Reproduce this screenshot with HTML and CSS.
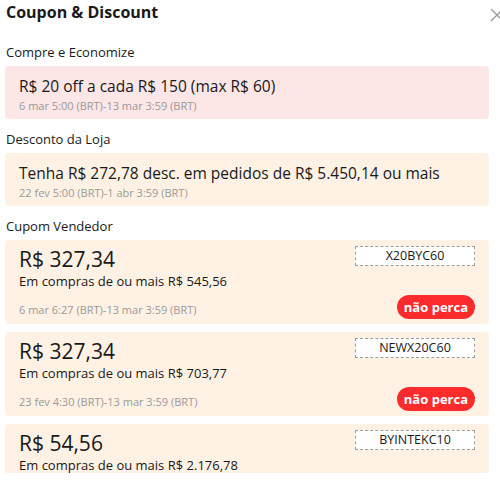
FILE: index.html
```html
<!DOCTYPE html>
<html lang="pt-BR">
<head>
    <meta charset="UTF-8">
    <meta name="viewport" content="width=device-width, initial-scale=1.0">
    <title>Coupon &amp; Discount</title>
    <link rel="stylesheet" href="styles.css">
</head>
<body>
    <div class="panel">
        <header class="panel-header">
            <h1>Coupon &amp; Discount</h1>
            <span class="close" aria-label="Fechar">
                <svg width="14" height="14" viewBox="0 0 14 14"><path d="M1 1 L13 13 M13 1 L1 13" stroke="#9a9a9a" stroke-width="1.3" fill="none"/></svg>
            </span>
        </header>

        <div class="panel-body">
            <div class="section-label">Compre e Economize</div>
            <div class="promo promo-red">
                <div class="promo-title">R$ 20 off a cada R$ 150 (max R$ 60)</div>
                <div class="promo-date">6 mar 5:00 (BRT)-13 mar 3:59 (BRT)</div>
            </div>

            <div class="section-label">Desconto da Loja</div>
            <div class="promo">
                <div class="promo-title">Tenha R$ 272,78 desc. em pedidos de R$ 5.450,14 ou mais</div>
                <div class="promo-date">22 fev 5:00 (BRT)-1 abr 3:59 (BRT)</div>
            </div>

            <div class="section-label">Cupom Vendedor</div>
            <div class="coupon">
                <div class="coupon-info">
                    <div class="coupon-amount">R$ 327,34</div>
                    <div class="coupon-min">Em compras de ou mais R$ 545,56</div>
                    <div class="promo-date coupon-date">6 mar 6:27 (BRT)-13 mar 3:59 (BRT)</div>
                </div>
                <div class="coupon-actions">
                    <div class="coupon-code">X20BYC60</div>
                    <button class="grab-button">não perca</button>
                </div>
            </div>

            <div class="coupon">
                <div class="coupon-info">
                    <div class="coupon-amount">R$ 327,34</div>
                    <div class="coupon-min">Em compras de ou mais R$ 703,77</div>
                    <div class="promo-date coupon-date">23 fev 4:30 (BRT)-13 mar 3:59 (BRT)</div>
                </div>
                <div class="coupon-actions">
                    <div class="coupon-code">NEWX20C60</div>
                    <button class="grab-button">não perca</button>
                </div>
            </div>

            <div class="coupon">
                <div class="coupon-info">
                    <div class="coupon-amount">R$ 54,56</div>
                    <div class="coupon-min">Em compras de ou mais R$ 2.176,78</div>
                </div>
                <div class="coupon-actions">
                    <div class="coupon-code">BYINTEKC10</div>
                </div>
            </div>
        </div>
    </div>
</body>
</html>
```

FILE: styles.css
```css
:root {
    --text-color: #191919;
    --muted-color: #999999;
    --red-card: #fde6e6;
    --cream-card: #fff2e4;
    --button-red: #fd2b2b;
}

body {
    font-family: "Open Sans", "Liberation Sans", sans-serif;
    color: var(--text-color);
    background-color: white;
    margin: 0;
    padding: 0;
}

.panel {
    height: 473px;
    display: flex;
    flex-direction: column;
    overflow: hidden;
}

.panel-header {
    display: flex;
    flex-shrink: 0;
    justify-content: space-between;
    align-items: flex-start;
    height: 32px;
    padding-left: 6px;
}

.panel-header h1 {
    margin: 0;
    font-size: 16px;
    font-weight: 700;
    line-height: 24px;
}

.close {
    margin-top: 5px;
    margin-right: -4px;
    width: 14px;
    height: 14px;
}

.panel-body {
    flex: 1;
    overflow: hidden;
    padding: 0 11px 0 5px;
}

.section-label {
    font-size: 13px;
    line-height: 20px;
    padding: 10px 0 0 1px;
    margin-bottom: 4px;
}

.promo {
    background-color: var(--cream-card);
    border-radius: 4px;
    padding: 9px 14px 4px;
}

.promo-red {
    background-color: var(--red-card);
}

.promo-title {
    font-size: 15.5px;
    line-height: 22px;
}

.promo-date {
    font-size: 11px;
    line-height: 18px;
    color: var(--muted-color);
}

.coupon {
    display: flex;
    justify-content: space-between;
    background-color: var(--cream-card);
    border-radius: 4px;
    padding: 6px 14px 5px;
    margin-bottom: 8px;
}

.coupon-info {
    display: flex;
    flex-direction: column;
}

.coupon-amount {
    font-size: 21px;
    line-height: 26px;
}

.coupon-min {
    font-size: 13px;
    line-height: 18px;
}

.coupon-date {
    margin-top: 11px;
}

.coupon-actions {
    display: flex;
    flex-direction: column;
    justify-content: space-between;
    align-items: flex-end;
}

.coupon-code {
    box-sizing: border-box;
    width: 120px;
    height: 20px;
    border: 1px dashed #9a9a9a;
    background-color: white;
    text-align: center;
    font-size: 12.5px;
    line-height: 18px;
}

.grab-button {
    background-color: var(--button-red);
    color: white;
    border: none;
    border-radius: 12px;
    height: 24px;
    padding: 0 7px;
    font-family: inherit;
    font-size: 13px;
    font-weight: 700;
    cursor: pointer;
}
```
